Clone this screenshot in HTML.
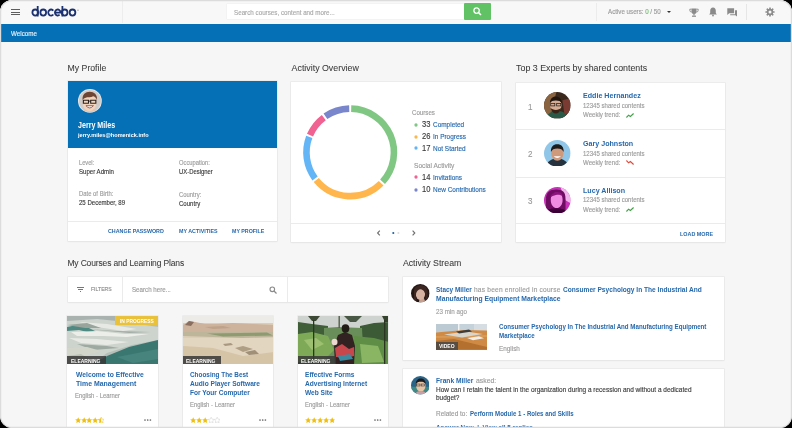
<!DOCTYPE html>
<html><head><meta charset="utf-8">
<style>
html,body{margin:0;padding:0;background:#000;width:792px;height:428px;overflow:hidden}
*{box-sizing:border-box}
#f{position:absolute;left:0;top:0;width:792px;height:428px;border-radius:12px;background:#f6f6f6;overflow:hidden;will-change:transform;font-family:"Liberation Sans",sans-serif;color:#333}
.a{position:absolute;white-space:nowrap;line-height:1;-webkit-text-stroke:0.14px currentColor}
.b,.a .b{-webkit-text-stroke:0}
.t{-webkit-text-stroke:0.06px currentColor}
.card{position:absolute;background:#fff;box-shadow:0 0 0 0.6px #e4e4e4,0 1px 1.5px rgba(0,0,0,0.06)}
.b{font-weight:bold}
.lnk{color:#2669ad}
.g{color:#9c9c9c}
.t{color:#3a3a3a}
.dk{color:#3a3a3a}
</style></head><body>
<svg width="0" height="0" style="position:absolute"><defs><filter id="bl" x="-20%" y="-20%" width="140%" height="140%"><feGaussianBlur stdDeviation="0.8"/></filter><filter id="bs" x="-20%" y="-20%" width="140%" height="140%"><feGaussianBlur stdDeviation="0.3"/></filter></defs></svg>
<div id="f">
<div class="a" style="left:0.00px;top:0.00px;width:792.00px;height:24.00px;background:#f8f8f8;"></div>
<div class="a" style="left:11.00px;top:8.90px;width:8.60px;height:1.10px;background:#5e5e5e;"></div>
<div class="a" style="left:11.00px;top:11.60px;width:8.60px;height:1.10px;background:#5e5e5e;"></div>
<div class="a" style="left:11.00px;top:14.30px;width:8.60px;height:1.10px;background:#5e5e5e;"></div>
<svg class="a" style="left:28px;top:2px" width="54" height="18" viewBox="0 0 54 18"><g fill="none" stroke="#1b3170" stroke-width="1.8">
<ellipse cx="7.25" cy="10.55" rx="2.85" ry="3.05"/><line x1="9.7" y1="4.1" x2="9.7" y2="14.5"/>
<ellipse cx="15.25" cy="10.55" rx="2.85" ry="3.05"/>
<path d="M25.3 8.6A2.85 3.05 0 1 0 25.3 12.5"/>
<path d="M27.2 10.55H32.45A2.75 3.0 0 1 0 31.6 12.7"/>
<ellipse cx="36.65" cy="10.55" rx="2.85" ry="3.05"/><line x1="34.4" y1="4.1" x2="34.4" y2="14.5"/>
<ellipse cx="44.5" cy="10.55" rx="2.85" ry="3.05"/>
</g><circle cx="50" cy="8.2" r="0.6" fill="#888"/></svg>
<div class="a" style="left:227.00px;top:3.50px;width:237.00px;height:15.60px;background:#fff;box-shadow:0 0 0 0.5px #ededed"></div>
<div class="a " style="left:234.00px;top:10.00px;font-size:6.88px;transform:scaleX(0.9091);transform-origin:0 0;color:#a8a8a8">Search courses, content and more...</div>
<div class="a" style="left:464.00px;top:3.40px;width:27.20px;height:16.60px;background:#60c264;border-radius:1px"></div>
<svg class="a" style="left:472px;top:5.9px" width="11" height="11" viewBox="0 0 11 11"><circle cx="4.6" cy="4.6" r="2.7" fill="none" stroke="#fff" stroke-width="1.3"/><line x1="6.6" y1="6.6" x2="9" y2="9" stroke="#fff" stroke-width="1.5"/></svg>
<div class="a" style="left:596.00px;top:3.00px;width:0.60px;height:18.00px;background:#ececec;"></div>
<div class="a" style="left:122.20px;top:1.00px;width:0.70px;height:22.00px;background:#ededed;"></div>
<div class="a " style="left:607.80px;top:9.00px;font-size:6.82px;transform:scaleX(0.9091);transform-origin:0 0;color:#9a9a9a">Active users: <span style="color:#6cc06c">0</span> / 50</div>
<div class="a" style="left:666.5px;top:11px;width:0;height:0;border-left:2.6px solid transparent;border-right:2.6px solid transparent;border-top:2.8px solid #333"></div>
<svg class="a" style="left:689px;top:7.5px" width="10" height="9" viewBox="0 0 10 9"><path d="M2.5 0.5h5v3a2.5 2.5 0 0 1-5 0z" fill="#8a8a8a"/><path d="M2.5 1.2H0.8v1a1.8 1.8 0 0 0 1.9 1.8M7.5 1.2h1.7v1a1.8 1.8 0 0 1-1.9 1.8" fill="none" stroke="#8a8a8a" stroke-width="0.9"/><rect x="4.4" y="5.5" width="1.2" height="2" fill="#8a8a8a"/><rect x="3" y="7.6" width="4" height="1.2" fill="#8a8a8a"/></svg>
<svg class="a" style="left:709px;top:7.3px" width="8" height="9.5" viewBox="0 0 8 9.5"><path d="M4 0.6c-1.8 0-2.8 1.4-2.8 3.2v2.2L0.2 7.4h7.6L6.8 6V3.8C6.8 2 5.8 0.6 4 0.6z" fill="#8a8a8a"/><circle cx="4" cy="8.5" r="0.9" fill="#8a8a8a"/></svg>
<svg class="a" style="left:726.5px;top:8px" width="10.5" height="9" viewBox="0 0 10.5 9"><path d="M0.3 0.3h6.8v5H2.2L0.3 7z" fill="#8a8a8a"/><path d="M8 2.2h2.2v6.6L8.4 7.2H3.2V6.2H8z" fill="#8a8a8a"/></svg>
<div class="a" style="left:745.50px;top:4.00px;width:0.60px;height:16.00px;background:#e6e6e6;"></div>
<svg class="a" style="left:765px;top:7.4px" width="10" height="10" viewBox="0 0 10 10"><g fill="#8c8c8c"><rect x="4.15" y="0.4" width="1.7" height="9.2" rx="0.3" transform="rotate(0 5 5)"/><rect x="4.15" y="0.4" width="1.7" height="9.2" rx="0.3" transform="rotate(45 5 5)"/><rect x="4.15" y="0.4" width="1.7" height="9.2" rx="0.3" transform="rotate(90 5 5)"/><rect x="4.15" y="0.4" width="1.7" height="9.2" rx="0.3" transform="rotate(135 5 5)"/><circle cx="5" cy="5" r="3.2"/></g><circle cx="5" cy="5" r="1.5" fill="#f8f8f8"/></svg>
<div class="a" style="left:0.00px;top:23.60px;width:792.00px;height:18.20px;background:#0670b6;"></div>
<div class="a " style="left:11.00px;top:31.00px;font-size:6.88px;transform:scaleX(0.9091);transform-origin:0 0;color:#e8f0f8">Welcome</div>
<div class="a t" style="left:67.60px;top:64.00px;font-size:8.70px;">My Profile</div>
<div class="a t" style="left:291.60px;top:64.00px;font-size:8.84px;">Activity Overview</div>
<div class="a t" style="left:516.10px;top:64.00px;font-size:8.84px;">Top 3 Experts by shared contents</div>
<div class="a t" style="left:67.40px;top:259.00px;font-size:8.50px;letter-spacing:-0.15px">My Courses and Learning Plans</div>
<div class="a t" style="left:402.90px;top:259.00px;font-size:8.77px;">Activity Stream</div>
<div class="card" style="left:67.50px;top:81.00px;width:209.50px;height:160.00px"></div>
<div class="a" style="left:67.50px;top:81.00px;width:209.50px;height:66.80px;background:#0670b6;"></div>
<svg class="a" style="left:77.9px;top:89.3px" width="23.8" height="23.8" viewBox="0 0 24 24">
<defs><clipPath id="c1"><circle cx="12" cy="12" r="11.1"/></clipPath></defs>
<circle cx="12" cy="12" r="12" fill="#e6e8ea"/>
<g clip-path="url(#c1)"><rect width="24" height="24" fill="#d2ccc8"/><g filter="url(#bs)"><path d="M3 26c0-4 4-6 9-6s9 2 9 6z" fill="#e8c4a8"/><ellipse cx="11.6" cy="14" rx="6.8" ry="8.4" fill="#f2d4bc"/><path d="M4.6 11c-0.4-5.4 2.8-8.2 7.2-8.2s7.8 2.8 7.4 8.2c-1.2-2.4-2.4-3.4-4-3.6-1.4 1-3.6 1.2-6 0.8-2 0.4-3.6 1.2-4.6 2.8z" fill="#6e4432"/><path d="M5.4 11.4h5.2v3h-5.2zM12.8 11.4h5.2v3h-5.2z" fill="none" stroke="#2a201c" stroke-width="1.1"/><line x1="10.6" y1="12.2" x2="12.8" y2="12.2" stroke="#2a201c" stroke-width="0.8"/><path d="M8 16.8q3.8 4.6 7.6 0z" fill="#f6f0ee" stroke="#7a3a34" stroke-width="0.7"/></g></g></svg>
<div class="a b" style="left:78.30px;top:121.00px;font-size:8.66px;transform:scaleX(0.8197);transform-origin:0 0;color:#fff">Jerry Miles</div>
<div class="a b" style="left:78.30px;top:132.00px;font-size:6.24px;transform:scaleX(0.8929);transform-origin:0 0;color:#fff">jerry.miles@homenick.info</div>
<div class="a g" style="left:79.10px;top:160.00px;font-size:6.27px;transform:scaleX(0.9091);transform-origin:0 0;">Level:</div>
<div class="a dk" style="left:79.10px;top:169.00px;font-size:6.71px;transform:scaleX(0.9091);transform-origin:0 0;">Super Admin</div>
<div class="a g" style="left:79.10px;top:191.00px;font-size:6.49px;transform:scaleX(0.9091);transform-origin:0 0;">Date of Birth:</div>
<div class="a dk" style="left:79.10px;top:200.00px;font-size:6.66px;transform:scaleX(0.9091);transform-origin:0 0;">25 December, 89</div>
<div class="a g" style="left:179.00px;top:160.00px;font-size:6.38px;transform:scaleX(0.9091);transform-origin:0 0;">Occupation:</div>
<div class="a dk" style="left:179.00px;top:169.00px;font-size:6.49px;transform:scaleX(0.9091);transform-origin:0 0;">UX-Designer</div>
<div class="a g" style="left:179.00px;top:192.00px;font-size:6.49px;transform:scaleX(0.9091);transform-origin:0 0;">Country:</div>
<div class="a dk" style="left:179.00px;top:201.00px;font-size:6.66px;transform:scaleX(0.9091);transform-origin:0 0;">Country</div>
<div class="a" style="left:67.50px;top:220.50px;width:209.50px;height:0.60px;background:#ebebeb;"></div>
<div class="a b lnk" style="left:108.20px;top:228.00px;font-size:6.00px;transform:scaleX(0.8929);transform-origin:0 0;">CHANGE PASSWORD</div>
<div class="a b lnk" style="left:178.90px;top:228.00px;font-size:6.00px;transform:scaleX(0.8929);transform-origin:0 0;">MY ACTIVITIES</div>
<div class="a b lnk" style="left:232.00px;top:229.00px;font-size:5.94px;transform:scaleX(0.8929);transform-origin:0 0;">MY PROFILE</div>
<div class="card" style="left:291.20px;top:82.30px;width:209.80px;height:159.70px"></div>
<svg class="a" style="left:300px;top:102px" width="101" height="101" viewBox="0 0 101 101"><path d="M51.19 6.66 A43.75 43.75 0 0 1 82.56 79.84" fill="none" stroke="#81c784" stroke-width="6.6"/><path d="M81.19 81.28 A43.75 43.75 0 0 1 16.25 77.99" fill="none" stroke="#ffb74d" stroke-width="6.6"/><path d="M15.03 76.42 A43.75 43.75 0 0 1 9.27 34.94" fill="none" stroke="#64b5f6" stroke-width="6.6"/><path d="M10.02 33.09 A43.75 43.75 0 0 1 23.81 15.51" fill="none" stroke="#f06292" stroke-width="6.6"/><path d="M25.42 14.34 A43.75 43.75 0 0 1 49.21 6.66" fill="none" stroke="#7986cb" stroke-width="6.6"/></svg>
<div class="a " style="left:412.30px;top:110.00px;font-size:6.77px;transform:scaleX(0.9091);transform-origin:0 0;color:#9a9a9a">Courses</div>
<svg class="a" style="left:413.50px;top:122.50px" width="4" height="4" viewBox="0 0 4 4"><circle cx="2" cy="2" r="1.65" fill="#7fc784"/></svg>
<div class="a dk" style="left:421.80px;top:120.00px;font-size:8.30px;transform:scaleX(0.9091);transform-origin:0 0;">33</div>
<div class="a lnk" style="left:432.80px;top:122.00px;font-size:7.10px;transform:scaleX(0.9091);transform-origin:0 0;">Completed</div>
<svg class="a" style="left:413.50px;top:134.50px" width="4" height="4" viewBox="0 0 4 4"><circle cx="2" cy="2" r="1.65" fill="#fbb74e"/></svg>
<div class="a dk" style="left:421.80px;top:132.00px;font-size:8.30px;transform:scaleX(0.9091);transform-origin:0 0;">26</div>
<div class="a lnk" style="left:432.80px;top:134.00px;font-size:7.10px;transform:scaleX(0.9091);transform-origin:0 0;">In Progress</div>
<svg class="a" style="left:413.50px;top:146.40px" width="4" height="4" viewBox="0 0 4 4"><circle cx="2" cy="2" r="1.65" fill="#63b4f4"/></svg>
<div class="a dk" style="left:421.80px;top:144.00px;font-size:8.30px;transform:scaleX(0.9091);transform-origin:0 0;">17</div>
<div class="a lnk" style="left:432.80px;top:146.00px;font-size:7.10px;transform:scaleX(0.9091);transform-origin:0 0;">Not Started</div>
<svg class="a" style="left:413.70px;top:175.20px" width="4" height="4" viewBox="0 0 4 4"><circle cx="2" cy="2" r="1.65" fill="#ef6393"/></svg>
<div class="a dk" style="left:422.30px;top:173.00px;font-size:8.30px;transform:scaleX(0.9091);transform-origin:0 0;">14</div>
<div class="a lnk" style="left:433.00px;top:175.00px;font-size:7.10px;transform:scaleX(0.9091);transform-origin:0 0;">Invitations</div>
<svg class="a" style="left:413.70px;top:187.50px" width="4" height="4" viewBox="0 0 4 4"><circle cx="2" cy="2" r="1.65" fill="#7a86cc"/></svg>
<div class="a dk" style="left:422.30px;top:185.00px;font-size:8.30px;transform:scaleX(0.9091);transform-origin:0 0;">10</div>
<div class="a lnk" style="left:433.00px;top:187.00px;font-size:7.10px;transform:scaleX(0.9091);transform-origin:0 0;">New Contributions</div>
<div class="a " style="left:414.10px;top:162.00px;font-size:7.28px;transform:scaleX(0.9091);transform-origin:0 0;color:#9a9a9a">Social Activity</div>
<div class="a" style="left:291.20px;top:223.00px;width:209.80px;height:0.60px;background:#ebebeb;"></div>
<svg class="a" style="left:374px;top:228px" width="46" height="10" viewBox="0 0 46 10"><path d="M5.8 2.6L3.6 5L5.8 7.4" fill="none" stroke="#707070" stroke-width="1.15"/><circle cx="19.3" cy="5" r="1.05" fill="#1d5fa8"/><circle cx="24.4" cy="5" r="1.05" fill="#dcdcdc"/><path d="M38.6 2.6L40.8 5L38.6 7.4" fill="none" stroke="#707070" stroke-width="1.15"/></svg>
<div class="card" style="left:515.70px;top:83.00px;width:209.70px;height:159.00px"></div>
<div class="a" style="left:515.70px;top:129.20px;width:209.70px;height:0.60px;background:#ebebeb;"></div>
<div class="a" style="left:515.70px;top:176.60px;width:209.70px;height:0.60px;background:#ebebeb;"></div>
<div class="a" style="left:515.70px;top:223.00px;width:209.70px;height:0.60px;background:#ebebeb;"></div>
<div class="a " style="left:528.00px;top:103.00px;font-size:8.80px;transform:scaleX(0.9091);transform-origin:0 0;color:#9a9a9a">1</div>
<svg class="a" style="left:544.4px;top:92.20px" width="26.6" height="26.6" viewBox="0 0 26 26"><defs><clipPath id="ea0"><circle cx="13" cy="13" r="13"/></clipPath></defs><g clip-path="url(#ea0)"><rect width="26" height="26" fill="#3a281c"/><g filter="url(#bs)"><path d="M0 0h12L6 26H0z" fill="#8a6440"/><path d="M18 8l8-2v14l-6 2z" fill="#7a3a30"/><path d="M2 26c1-5 5-7.5 11-7.5s9 2.5 10 7.5z" fill="#2c5a46"/><ellipse cx="11.5" cy="13" rx="5.6" ry="7" fill="#d6ad94"/><path d="M5.8 11c0-4.4 2.4-6.6 5.8-6.6s5.8 2.2 5.8 6.6c-1-2-3-2.6-5.8-2.6s-4.8 0.6-5.8 2.6z" fill="#231610"/><path d="M6.4 15.5c1 4 3 5.6 5.2 5.6s4.2-1.6 5.2-5.6c-1.2 1.4-3 2-5.2 2s-4-0.6-5.2-2z" fill="#3a2418"/><rect x="6.6" y="11.2" width="4" height="2.4" fill="none" stroke="#1a1a1a" stroke-width="0.7"/><rect x="12.4" y="11.2" width="4" height="2.4" fill="none" stroke="#1a1a1a" stroke-width="0.7"/></g></g></svg>
<div class="a b lnk" style="left:582.90px;top:92.00px;font-size:7.97px;transform:scaleX(0.8929);transform-origin:0 0;">Eddie Hernandez</div>
<div class="a " style="left:582.90px;top:103.00px;font-size:6.66px;transform:scaleX(0.9091);transform-origin:0 0;color:#9b9b9b">12345 shared contents</div>
<div class="a " style="left:582.90px;top:112.00px;font-size:6.73px;transform:scaleX(0.9091);transform-origin:0 0;color:#9b9b9b">Weekly trend:</div>
<svg class="a" style="left:626px;top:112.60px" width="8" height="5" viewBox="0 0 8 5"><path d="M0.4 4.5L2.6 2.2L4.4 3.4L7.6 0.5" fill="none" stroke="#43a047" stroke-width="1.15"/></svg>
<div class="a " style="left:528.00px;top:150.00px;font-size:8.80px;transform:scaleX(0.9091);transform-origin:0 0;color:#9a9a9a">2</div>
<svg class="a" style="left:544.4px;top:139.80px" width="26.6" height="26.6" viewBox="0 0 26 26"><defs><clipPath id="ea1"><circle cx="13" cy="13" r="13"/></clipPath></defs><g clip-path="url(#ea1)"><rect width="26" height="26" fill="#90c6e8"/><g filter="url(#bs)"><path d="M2 26c1-5 5-8 11-8s10 3 11 8z" fill="#26313c"/><ellipse cx="13" cy="13.2" rx="6" ry="7.2" fill="#cf9a7c"/><path d="M6.8 11.8c-0.4-5 2.4-7.6 6.2-7.6s6.6 2.6 6.2 7.6c-1-2.4-3-3.4-6.2-3.4s-5.2 1-6.2 3.4z" fill="#1a1a1e"/><path d="M9.4 16q3.6 3 7.2 0z" fill="#fff"/></g></g></svg>
<div class="a b lnk" style="left:582.90px;top:140.00px;font-size:7.97px;transform:scaleX(0.8929);transform-origin:0 0;">Gary Johnston</div>
<div class="a " style="left:582.90px;top:151.00px;font-size:6.66px;transform:scaleX(0.9091);transform-origin:0 0;color:#9b9b9b">12345 shared contents</div>
<div class="a " style="left:582.90px;top:160.00px;font-size:6.73px;transform:scaleX(0.9091);transform-origin:0 0;color:#9b9b9b">Weekly trend:</div>
<svg class="a" style="left:626px;top:160.20px" width="8" height="5" viewBox="0 0 8 5"><path d="M0.4 0.5L2.6 2.8L4.4 1.6L7.6 4.5" fill="none" stroke="#e04a3a" stroke-width="1.15"/></svg>
<div class="a " style="left:528.00px;top:197.00px;font-size:8.80px;transform:scaleX(0.9091);transform-origin:0 0;color:#9a9a9a">3</div>
<svg class="a" style="left:544.4px;top:186.50px" width="26.6" height="26.6" viewBox="0 0 26 26"><defs><clipPath id="ea2"><circle cx="13" cy="13" r="13"/></clipPath></defs><g clip-path="url(#ea2)"><rect width="26" height="26" fill="#c832b8"/><g filter="url(#bs)"><path d="M16 0h10v16l-5-3z" fill="#f2b4ec"/><path d="M2 26V12C2 5 6 2.4 12 2.4S21 5 21 11v15z" fill="#6e0862"/><path d="M6.6 12.6c0-4.4 2.4-7.2 6-7.2s5.6 2.8 5.6 7.2c0 4.6-2.6 8-5.8 8s-5.8-3.4-5.8-8z" fill="#f08ce2"/><path d="M6 10c1-3 3-5 7-5s5 2 5.6 4c-2-1.4-4.6-1.8-7-1.2-2.2 0.6-4.4 1.4-5.6 2.2z" fill="#8a127c"/><path d="M0 26c2-4 6-5 12-5s9 1 11 5z" fill="#3a0434"/></g></g></svg>
<div class="a b lnk" style="left:582.90px;top:187.00px;font-size:7.97px;transform:scaleX(0.8929);transform-origin:0 0;">Lucy Allison</div>
<div class="a " style="left:582.90px;top:197.00px;font-size:6.66px;transform:scaleX(0.9091);transform-origin:0 0;color:#9b9b9b">12345 shared contents</div>
<div class="a " style="left:582.90px;top:207.00px;font-size:6.73px;transform:scaleX(0.9091);transform-origin:0 0;color:#9b9b9b">Weekly trend:</div>
<svg class="a" style="left:626px;top:206.90px" width="8" height="5" viewBox="0 0 8 5"><path d="M0.4 4.5L2.6 2.2L4.4 3.4L7.6 0.5" fill="none" stroke="#43a047" stroke-width="1.15"/></svg>
<div class="a b lnk" style="left:679.70px;top:231.00px;font-size:6.07px;transform:scaleX(0.8929);transform-origin:0 0;">LOAD MORE</div>
<div class="card" style="left:68.00px;top:276.80px;width:320.30px;height:25.20px"></div>
<div class="a" style="left:121.80px;top:276.80px;width:0.60px;height:25.20px;background:#ebebeb;"></div>
<div class="a" style="left:287.30px;top:276.80px;width:0.60px;height:25.20px;background:#ebebeb;"></div>
<div class="a" style="left:76.80px;top:286.80px;width:7.40px;height:0.90px;background:#777;"></div>
<div class="a" style="left:78.20px;top:288.80px;width:4.60px;height:0.90px;background:#777;"></div>
<div class="a" style="left:79.60px;top:290.80px;width:1.80px;height:0.90px;background:#777;"></div>
<div class="a " style="left:91.40px;top:287.00px;font-size:5.63px;transform:scaleX(0.9091);transform-origin:0 0;color:#8a8a8a">FILTERS</div>
<div class="a " style="left:131.60px;top:287.00px;font-size:6.80px;transform:scaleX(0.9091);transform-origin:0 0;color:#9a9a9a">Search here...</div>
<svg class="a" style="left:269px;top:285.5px" width="8.5" height="8" viewBox="0 0 8.5 8"><circle cx="3.3" cy="3.3" r="2.3" fill="none" stroke="#8a8a8a" stroke-width="1.1"/><line x1="5" y1="5" x2="7.5" y2="7.5" stroke="#8a8a8a" stroke-width="1.3"/></svg>
<div class="card" style="left:67.30px;top:316.30px;width:90.50px;height:130.00px"></div>
<svg class="a" style="left:67.30px;top:316.3px" width="90.5" height="48.2" viewBox="0 0 90.5 48.2" preserveAspectRatio="none"><rect width="91" height="49" fill="#b5beb8"/><g filter="url(#bs)"><rect width="91" height="5" fill="#a9b2ae"/><path d="M0 5L30 3L60 6L91 11V24L65 29L40 37L24 49H0z" fill="#cdd3cd"/><path d="M0 11L10 9L22 12L30 16L24 17L12 14L0 15z" fill="#4f8a82"/><path d="M12 6L40 8L70 13L56 15L30 11z" fill="#e6e9e4"/><path d="M0 9L20 7L34 12L18 12z" fill="#98a49c"/><path d="M4 16L30 15L58 18L82 18L60 21L36 20L10 20z" fill="#eceee9"/><path d="M20 13L50 15L84 16L62 17z" fill="#a2aca6"/><path d="M2 22L30 23L62 26L40 29L14 27z" fill="#e8ebe5"/><path d="M10 28L40 30L52 32L26 34z" fill="#9ea9a2"/><path d="M0 32L20 31L34 35L16 40L0 42z" fill="#d2d6ca"/><path d="M0 40L14 38L24 44L10 49H0z" fill="#b8bfb2"/><path d="M24 49L40 40L62 31L91 24V49z" fill="#3b7771"/><path d="M50 41L91 33V43L66 47z" fill="#46847e"/></g></svg>
<div class="a" style="left:67.30px;top:356.30px;width:38.30px;height:8.20px;background:rgba(55,55,55,0.85);"></div>
<div class="a b" style="left:70.90px;top:359.00px;font-size:5.60px;transform:scaleX(0.8929);transform-origin:0 0;color:#fff">ELEARNING</div>
<div class="a b lnk" style="left:76.20px;top:371.00px;font-size:7.57px;transform:scaleX(0.8929);transform-origin:0 0;">Welcome to Effective</div>
<div class="a b lnk" style="left:76.20px;top:380.00px;font-size:7.78px;transform:scaleX(0.8929);transform-origin:0 0;">Time Management</div>
<div class="a " style="left:74.70px;top:393.00px;font-size:6.51px;transform:scaleX(0.9091);transform-origin:0 0;color:#9b9b9b">English - Learner</div>
<svg class="a" style="left:74.70px;top:417.00px" width="6.4" height="6.4" viewBox="0 0 6.4 6.4"><polygon points="3.20,0.20 4.11,2.15 6.24,2.41 4.67,3.88 5.08,5.99 3.20,4.95 1.32,5.99 1.73,3.88 0.16,2.41 2.29,2.15" fill="#f0bf10"/></svg>
<svg class="a" style="left:80.55px;top:417.00px" width="6.4" height="6.4" viewBox="0 0 6.4 6.4"><polygon points="3.20,0.20 4.11,2.15 6.24,2.41 4.67,3.88 5.08,5.99 3.20,4.95 1.32,5.99 1.73,3.88 0.16,2.41 2.29,2.15" fill="#f0bf10"/></svg>
<svg class="a" style="left:86.40px;top:417.00px" width="6.4" height="6.4" viewBox="0 0 6.4 6.4"><polygon points="3.20,0.20 4.11,2.15 6.24,2.41 4.67,3.88 5.08,5.99 3.20,4.95 1.32,5.99 1.73,3.88 0.16,2.41 2.29,2.15" fill="#f0bf10"/></svg>
<svg class="a" style="left:92.25px;top:417.00px" width="6.4" height="6.4" viewBox="0 0 6.4 6.4"><polygon points="3.20,0.20 4.11,2.15 6.24,2.41 4.67,3.88 5.08,5.99 3.20,4.95 1.32,5.99 1.73,3.88 0.16,2.41 2.29,2.15" fill="#f0bf10"/></svg>
<svg class="a" style="left:98.10px;top:417.00px" width="6.4" height="6.4" viewBox="0 0 6.4 6.4"><defs><clipPath id="hs04"><rect width="3.2" height="6.4"/></clipPath></defs><polygon points="3.20,0.20 4.11,2.15 6.24,2.41 4.67,3.88 5.08,5.99 3.20,4.95 1.32,5.99 1.73,3.88 0.16,2.41 2.29,2.15" fill="none" stroke="#f0bf10" stroke-width="0.5"/><polygon points="3.20,0.20 4.11,2.15 6.24,2.41 4.67,3.88 5.08,5.99 3.20,4.95 1.32,5.99 1.73,3.88 0.16,2.41 2.29,2.15" fill="#f0bf10" clip-path="url(#hs04)"/></svg>
<svg class="a" style="left:143.80px;top:417.6px" width="9" height="4" viewBox="0 0 9 4"><circle cx="1" cy="2" r="0.85" fill="#666"/><circle cx="3.7" cy="2" r="0.85" fill="#666"/><circle cx="6.4" cy="2" r="0.85" fill="#666"/></svg>
<div class="card" style="left:182.70px;top:316.30px;width:90.50px;height:130.00px"></div>
<svg class="a" style="left:182.70px;top:316.3px" width="90.5" height="48.2" viewBox="0 0 90.5 48.2" preserveAspectRatio="none"><rect width="91" height="49" fill="#dccdb6"/><g filter="url(#bs)"><rect width="91" height="7" fill="#ecebe8"/><path d="M0 9L6 5L12 6L22 8L34 8L50 7L70 8L91 9V17H0z" fill="#cdb29c"/><path d="M2 9L6 5L11 6L8 10z" fill="#8a6e5e"/><path d="M22 11L40 10L48 12L30 13z" fill="#bfa28a"/><path d="M0 16H91V21L60 22L30 21L0 20z" fill="#bdb69a"/><path d="M24 17.5L84 16.5L90 19.5L40 20.5z" fill="#8e9a70"/><path d="M10 23L70 22L80 24L30 25z" fill="#cbbba0"/><path d="M0 22H91V49H0z" fill="#e2d6c0"/><path d="M0 30L30 32L60 40L91 36V49H0z" fill="#d6c4a6"/><path d="M52 32L60 30L70 33L60 36z" fill="#ae9e84"/><path d="M62 36L72 34L76 38L66 39z" fill="#a09078"/><path d="M40 28L48 27L50 29L42 30z" fill="#a89880"/></g></svg>
<div class="a" style="left:182.70px;top:356.30px;width:38.30px;height:8.20px;background:rgba(55,55,55,0.85);"></div>
<div class="a b" style="left:186.30px;top:359.00px;font-size:5.60px;transform:scaleX(0.8929);transform-origin:0 0;color:#fff">ELEARNING</div>
<div class="a b lnk" style="left:190.10px;top:372.00px;font-size:7.16px;transform:scaleX(0.8929);transform-origin:0 0;">Choosing The Best</div>
<div class="a b lnk" style="left:190.10px;top:380.00px;font-size:7.40px;transform:scaleX(0.8929);transform-origin:0 0;">Audio Player Software</div>
<div class="a b lnk" style="left:190.10px;top:389.00px;font-size:7.39px;transform:scaleX(0.8929);transform-origin:0 0;">For Your Computer</div>
<div class="a " style="left:190.10px;top:402.00px;font-size:6.51px;transform:scaleX(0.9091);transform-origin:0 0;color:#9b9b9b">English - Learner</div>
<svg class="a" style="left:190.10px;top:417.00px" width="6.4" height="6.4" viewBox="0 0 6.4 6.4"><polygon points="3.20,0.20 4.11,2.15 6.24,2.41 4.67,3.88 5.08,5.99 3.20,4.95 1.32,5.99 1.73,3.88 0.16,2.41 2.29,2.15" fill="#f0bf10"/></svg>
<svg class="a" style="left:195.95px;top:417.00px" width="6.4" height="6.4" viewBox="0 0 6.4 6.4"><polygon points="3.20,0.20 4.11,2.15 6.24,2.41 4.67,3.88 5.08,5.99 3.20,4.95 1.32,5.99 1.73,3.88 0.16,2.41 2.29,2.15" fill="#f0bf10"/></svg>
<svg class="a" style="left:201.80px;top:417.00px" width="6.4" height="6.4" viewBox="0 0 6.4 6.4"><polygon points="3.20,0.20 4.11,2.15 6.24,2.41 4.67,3.88 5.08,5.99 3.20,4.95 1.32,5.99 1.73,3.88 0.16,2.41 2.29,2.15" fill="#f0bf10"/></svg>
<svg class="a" style="left:207.65px;top:417.00px" width="6.4" height="6.4" viewBox="0 0 6.4 6.4"><polygon points="3.20,0.20 4.11,2.15 6.24,2.41 4.67,3.88 5.08,5.99 3.20,4.95 1.32,5.99 1.73,3.88 0.16,2.41 2.29,2.15" fill="none" stroke="#cfcfcf" stroke-width="0.5"/></svg>
<svg class="a" style="left:213.50px;top:417.00px" width="6.4" height="6.4" viewBox="0 0 6.4 6.4"><polygon points="3.20,0.20 4.11,2.15 6.24,2.41 4.67,3.88 5.08,5.99 3.20,4.95 1.32,5.99 1.73,3.88 0.16,2.41 2.29,2.15" fill="none" stroke="#cfcfcf" stroke-width="0.5"/></svg>
<svg class="a" style="left:259.20px;top:417.6px" width="9" height="4" viewBox="0 0 9 4"><circle cx="1" cy="2" r="0.85" fill="#666"/><circle cx="3.7" cy="2" r="0.85" fill="#666"/><circle cx="6.4" cy="2" r="0.85" fill="#666"/></svg>
<div class="card" style="left:297.70px;top:316.30px;width:90.50px;height:130.00px"></div>
<svg class="a" style="left:297.70px;top:316.3px" width="90.5" height="48.2" viewBox="0 0 90.5 48.2" preserveAspectRatio="none"><rect width="91" height="49" fill="#cfd3cf"/><g filter="url(#bs)"><path d="M0 6L14 8L30 10L30 49H0z" fill="#3f5e38"/><path d="M62 10L76 7L91 6V49H62z" fill="#3a5a34"/><path d="M26 12L40 11L64 12L66 49H26z" fill="#6a8e5a"/><path d="M0 18L14 16L30 20L36 34L24 46L0 46z" fill="#7eaa58"/><path d="M6 24L18 22L26 28L14 34z" fill="#9cc070"/><path d="M56 20L76 22L91 26V49H56z" fill="#5e8f46"/><path d="M62 28L80 30L86 46L64 47z" fill="#8ab664"/><path d="M10 0h12l-4 5h-4z" fill="#3c4a36"/><path d="M46 0h18l-6 6h-6z" fill="#4a5844"/><path d="M84 0h7v6h-4z" fill="#34422e"/><rect x="40.5" y="0" width="1.4" height="12" fill="#52604c"/><rect x="15" y="4" width="1.3" height="40" fill="#2a3624"/><rect x="86" y="4" width="1.3" height="44" fill="#2a3624"/><path d="M37 49L36 30L40 19L47 16L54 19L57 30L56 49z" fill="#302422"/><ellipse cx="47.5" cy="12.5" rx="3.8" ry="4.2" fill="#241a18"/><path d="M37 32L44 28L51 33L56 31L56 40L48 42L38 41z" fill="#c8464e"/><path d="M40 40L52 38L55 43L42 45z" fill="#3a8aa0"/><ellipse cx="36.5" cy="26" rx="3" ry="3.2" fill="#ecd8d0"/></g></svg>
<div class="a" style="left:297.70px;top:356.30px;width:38.30px;height:8.20px;background:rgba(55,55,55,0.85);"></div>
<div class="a b" style="left:301.30px;top:359.00px;font-size:5.60px;transform:scaleX(0.8929);transform-origin:0 0;color:#fff">ELEARNING</div>
<div class="a b lnk" style="left:305.10px;top:371.00px;font-size:7.39px;transform:scaleX(0.8929);transform-origin:0 0;">Effective Forms</div>
<div class="a b lnk" style="left:305.10px;top:380.00px;font-size:7.39px;transform:scaleX(0.8929);transform-origin:0 0;">Advertising Internet</div>
<div class="a b lnk" style="left:305.10px;top:389.00px;font-size:7.39px;transform:scaleX(0.8929);transform-origin:0 0;">Web Site</div>
<div class="a " style="left:305.10px;top:402.00px;font-size:6.51px;transform:scaleX(0.9091);transform-origin:0 0;color:#9b9b9b">English - Learner</div>
<svg class="a" style="left:305.10px;top:417.00px" width="6.4" height="6.4" viewBox="0 0 6.4 6.4"><polygon points="3.20,0.20 4.11,2.15 6.24,2.41 4.67,3.88 5.08,5.99 3.20,4.95 1.32,5.99 1.73,3.88 0.16,2.41 2.29,2.15" fill="#f0bf10"/></svg>
<svg class="a" style="left:310.95px;top:417.00px" width="6.4" height="6.4" viewBox="0 0 6.4 6.4"><polygon points="3.20,0.20 4.11,2.15 6.24,2.41 4.67,3.88 5.08,5.99 3.20,4.95 1.32,5.99 1.73,3.88 0.16,2.41 2.29,2.15" fill="#f0bf10"/></svg>
<svg class="a" style="left:316.80px;top:417.00px" width="6.4" height="6.4" viewBox="0 0 6.4 6.4"><polygon points="3.20,0.20 4.11,2.15 6.24,2.41 4.67,3.88 5.08,5.99 3.20,4.95 1.32,5.99 1.73,3.88 0.16,2.41 2.29,2.15" fill="#f0bf10"/></svg>
<svg class="a" style="left:322.65px;top:417.00px" width="6.4" height="6.4" viewBox="0 0 6.4 6.4"><polygon points="3.20,0.20 4.11,2.15 6.24,2.41 4.67,3.88 5.08,5.99 3.20,4.95 1.32,5.99 1.73,3.88 0.16,2.41 2.29,2.15" fill="#f0bf10"/></svg>
<svg class="a" style="left:328.50px;top:417.00px" width="6.4" height="6.4" viewBox="0 0 6.4 6.4"><polygon points="3.20,0.20 4.11,2.15 6.24,2.41 4.67,3.88 5.08,5.99 3.20,4.95 1.32,5.99 1.73,3.88 0.16,2.41 2.29,2.15" fill="#f0bf10"/></svg>
<svg class="a" style="left:374.20px;top:417.6px" width="9" height="4" viewBox="0 0 9 4"><circle cx="1" cy="2" r="0.85" fill="#666"/><circle cx="3.7" cy="2" r="0.85" fill="#666"/><circle cx="6.4" cy="2" r="0.85" fill="#666"/></svg>
<div class="a" style="left:114.70px;top:316.30px;width:43.10px;height:8.40px;background:#e9c13b;"></div>
<div class="a b" style="left:120.30px;top:319.00px;font-size:5.43px;transform:scaleX(0.8929);transform-origin:0 0;color:#fff">IN PROGRESS</div>
<div class="card" style="left:402.90px;top:277.10px;width:321.30px;height:83.00px"></div>
<svg class="a" style="left:411.1px;top:284.4px" width="18.6" height="18.6" viewBox="0 0 19 19"><defs><clipPath id="sa"><circle cx="9.5" cy="9.5" r="9.5"/></clipPath></defs><g clip-path="url(#sa)"><rect width="19" height="19" fill="#241814"/><g filter="url(#bs)"><path d="M8 19L9 14L13 14L15 19z" fill="#c8a090"/><ellipse cx="9.6" cy="10" rx="4.8" ry="6.4" fill="#d6b2a2"/><path d="M3 19V8C3 3.5 6 1.4 10 1.4S17 3.5 17 8v11h-2.4c0.6-4 0.4-8-0.6-10.4-1-2-2.4-3-4.4-3.2C7.8 5.6 5.8 7 5.2 9.6 4.8 12.4 5.4 16 6.2 19z" fill="#3a2620"/></g></g></svg>
<div class="a b lnk" style="left:436.20px;top:286.00px;font-size:7.21px;transform:scaleX(0.8929);transform-origin:0 0;">Stacy Miller</div>
<div class="a " style="left:474.20px;top:286.00px;font-size:7.26px;transform:scaleX(0.9091);transform-origin:0 0;color:#9b9b9b;letter-spacing:0.23px">has been enrolled in course</div>
<div class="a b lnk" style="left:563.40px;top:286.00px;font-size:7.40px;transform:scaleX(0.8929);transform-origin:0 0;">Consumer Psychology In The Industrial And</div>
<div class="a b lnk" style="left:436.20px;top:295.00px;font-size:7.58px;transform:scaleX(0.8929);transform-origin:0 0;">Manufacturing Equipment Marketplace</div>
<div class="a " style="left:436.20px;top:309.00px;font-size:6.86px;transform:scaleX(0.9091);transform-origin:0 0;color:#a0a0a0">23 min ago</div>
<svg class="a" style="left:435.8px;top:324.4px" width="51" height="25.8" viewBox="0 0 51 25.8" preserveAspectRatio="none"><rect width="51" height="25.8" fill="#c6d2da"/><g filter="url(#bs)"><rect x="0" y="0" width="22" height="8" fill="#bccad4"/><rect x="22" y="0" width="1.4" height="7" fill="#f0f4f6"/><rect x="38" y="0" width="13" height="7" fill="#d6dee4"/><path d="M0 8.5L28 6L51 6.5V25.8H0z" fill="#cf8a44"/><path d="M0 17L18 15L51 23V25.8H0z" fill="#b4702e"/><path d="M0 12L51 11V13L0 14z" fill="#d99a56"/><path d="M8 10.5L30 7.5L47 10L26 13.5z" fill="#d8d6cc"/><path d="M20 7.5L33 5.5L36 7.5L23 9.5z" fill="#3e3e3e"/><path d="M31 14L43 12.2L48 14.2L37 16.2z" fill="#f0eeea"/></g></svg>
<div class="a" style="left:435.80px;top:342.00px;width:22.00px;height:8.20px;background:rgba(70,70,70,0.85);"></div>
<div class="a b" style="left:438.60px;top:344.00px;font-size:5.60px;transform:scaleX(0.8929);transform-origin:0 0;color:#fff">VIDEO</div>
<div class="a b lnk" style="left:499.10px;top:324.00px;font-size:6.91px;transform:scaleX(0.8929);transform-origin:0 0;">Consumer Psychology In The Industrial And Manufacturing Equipment</div>
<div class="a b lnk" style="left:499.10px;top:333.00px;font-size:6.91px;transform:scaleX(0.8929);transform-origin:0 0;">Marketplace</div>
<div class="a " style="left:499.10px;top:345.00px;font-size:7.01px;transform:scaleX(0.9091);transform-origin:0 0;color:#9b9b9b">English</div>
<div class="card" style="left:402.90px;top:368.60px;width:321.30px;height:80.00px"></div>
<svg class="a" style="left:410.6px;top:376.2px" width="18.6" height="18.6" viewBox="0 0 19 19"><defs><clipPath id="fa"><circle cx="9.5" cy="9.5" r="9.5"/></clipPath></defs><g clip-path="url(#fa)"><rect width="19" height="19" fill="#2a6488"/><g filter="url(#bs)"><rect y="11" width="19" height="8" fill="#3f8a86"/><ellipse cx="10" cy="10" rx="4.8" ry="6" fill="#e6c4a6"/><path d="M5 8c0-3.4 2-5.4 5-5.4s5 2 5 5.4c-1-1.6-2.6-2.2-5-2.2s-4 0.6-5 2.2z" fill="#1e1a1a"/><rect x="5.6" y="8.2" width="3.6" height="2" fill="none" stroke="#333" stroke-width="0.6"/><rect x="10.4" y="8.2" width="3.6" height="2" fill="none" stroke="#333" stroke-width="0.6"/><path d="M4 19c1-2.6 3-3.6 6-3.6s5 1 6 3.6z" fill="#c8a0a8"/></g></g></svg>
<div class="a b lnk" style="left:436.40px;top:377.00px;font-size:7.44px;transform:scaleX(0.8929);transform-origin:0 0;">Frank Miller</div>
<div class="a " style="left:476.40px;top:377.00px;font-size:7.54px;transform:scaleX(0.9091);transform-origin:0 0;color:#9a9a9a">asked:</div>
<div class="a dk" style="left:436.40px;top:387.00px;font-size:7.15px;transform:scaleX(0.9091);transform-origin:0 0;">How can I retain the talent in the organization during a recession and without a dedicated</div>
<div class="a dk" style="left:436.40px;top:395.00px;font-size:7.15px;transform:scaleX(0.9091);transform-origin:0 0;">budget?</div>
<div class="a " style="left:436.40px;top:411.00px;font-size:7.12px;transform:scaleX(0.9091);transform-origin:0 0;color:#9a9a9a">Related to:</div>
<div class="a b lnk" style="left:469.70px;top:411.00px;font-size:6.84px;transform:scaleX(0.8929);transform-origin:0 0;">Perform Module 1 - Roles and Skills</div>
<div class="a b lnk" style="left:436.40px;top:424.00px;font-size:7.06px;transform:scaleX(0.8929);transform-origin:0 0;">Answer Now &nbsp;|&nbsp; View all 5 replies</div>
<div class="a" style="left:0;top:0;width:792px;height:428px;border-radius:12px;box-shadow:inset 0 0 0 1.2px #dcdcdc"></div>
</div></body></html>
